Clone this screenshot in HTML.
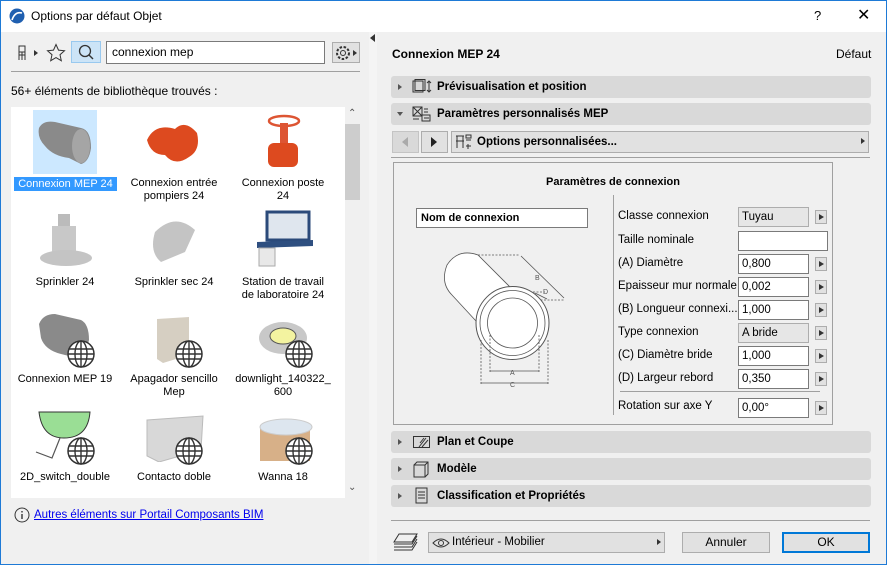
<!DOCTYPE html>
<html><head><meta charset="utf-8"><style>
*{box-sizing:border-box;margin:0;padding:0}
body{width:887px;height:565px;overflow:hidden;background:#f0f0f0;font-family:"Liberation Sans",sans-serif;font-size:12px;color:#000;position:relative}
.a{position:absolute}
.win{position:absolute;left:0;top:0;width:887px;height:565px;border:1px solid #1e7ad6}
.bar{position:absolute;left:391px;width:480px;height:22px;background:#d9d9d9;border-radius:3px;font-weight:bold;font-size:11.5px;line-height:22px;padding-left:46px}
.bar .tri{position:absolute;left:7px;top:8px;width:0;height:0;border-left:4px solid #555;border-top:3px solid transparent;border-bottom:3px solid transparent}
.lbl{position:absolute;left:618px;font-size:11.5px}
.fld{position:absolute;left:738px;width:71px;height:20px;background:#fff;border:1px solid #7a7a7a;font-size:11.5px;line-height:18px;padding-left:3px}
.fld.g{background:#e6e6e6;border-color:#adadad}
.arr{position:absolute;left:815px;width:12px;height:14px;background:#e1e1e1;border:1px solid #adadad}
.arr:after{content:"";position:absolute;left:3px;top:3px;border-left:5px solid #333;border-top:3px solid transparent;border-bottom:3px solid transparent}
.it{position:absolute;width:110px;text-align:center;font-size:11px;line-height:13px}
.globe{position:absolute;width:28px;height:28px}
</style></head><body>
<div class="a" style="left:0;top:0;width:887px;height:32px;background:#fff"></div>
<svg class="a" style="left:9px;top:8px" width="16" height="16"><circle cx="8" cy="8" r="7.5" fill="#1f5fb0"/><path d="M3 12 Q6 3 13 5" stroke="#fff" stroke-width="1.6" fill="none"/></svg>
<div class="a" style="left:31px;top:9px;font-size:12px">Options par défaut Objet</div>
<div class="a" style="left:814px;top:8px;font-size:13px">?</div>
<div class="a" style="left:857px;top:5px;font-size:16px">✕</div>

<!-- left toolbar -->
<svg class="a" style="left:16px;top:44px" width="24" height="18"><path d="M3 2h6v6H3zM3 8v8M9 8v8M6 8v8M3 11h6" stroke="#333" fill="none"/><path d="M18 6l4 3-4 3z" fill="#333"/></svg>
<svg class="a" style="left:46px;top:43px" width="20" height="20"><path d="M10 1.5l2.5 5.6 6 .6-4.5 4 1.3 6-5.3-3.1-5.3 3.1 1.3-6-4.5-4 6-.6z" stroke="#333" fill="none"/></svg>
<div class="a" style="left:71px;top:41px;width:30px;height:22px;background:#cce4f7;border:1px solid #99c9ef"></div>
<svg class="a" style="left:77px;top:44px" width="18" height="18"><circle cx="8" cy="7" r="5.5" stroke="#333" fill="none" stroke-width="1.3"/><path d="M12 11l4 4" stroke="#333" stroke-width="1.4"/></svg>
<div class="a" style="left:106px;top:41px;width:219px;height:23px;background:#fff;border:1px solid #7a7a7a;padding:3px 0 0 5px;font-size:12px">connexion mep</div>
<div class="a" style="left:332px;top:42px;width:28px;height:21px;background:#e1e1e1;border:1px solid #adadad"></div>
<svg class="a" style="left:335px;top:44px" width="24" height="18"><circle cx="8" cy="9" r="6" stroke="#333" fill="none" stroke-dasharray="2.5 1.6" stroke-width="2"/><circle cx="8" cy="9" r="2.5" stroke="#333" fill="none"/><path d="M18 6l4 3-4 3z" fill="#333"/></svg>
<div class="a" style="left:11px;top:71px;width:349px;height:1px;background:#a0a0a0"></div>
<div class="a" style="left:11px;top:84px;font-size:12px">56+ éléments de bibliothèque trouvés :</div>

<!-- list -->
<div class="a" style="left:11px;top:107px;width:334px;height:391px;background:#fff"></div>
<div class="a" style="left:345px;top:107px;width:15px;height:391px;background:#f0f0f0"></div>
<div class="a" style="left:345px;top:124px;width:15px;height:76px;background:#cdcdcd"></div>
<div class="a" style="left:348px;top:108px;font-size:10px;color:#555">⌃</div>
<div class="a" style="left:348px;top:482px;font-size:10px;color:#555">⌄</div>

<div class="a" style="left:33px;top:110px;width:64px;height:64px;background:#cce8ff"></div>
<svg class="a" style="left:33px;top:110px" width="64" height="64"><path d="M6 18 Q10 10 22 12 L48 18 Q58 20 58 38 Q56 52 48 54 L36 48 Q20 46 12 36 Q4 28 6 18z" fill="#8a8a8a"/><ellipse cx="48" cy="36" rx="9" ry="17" fill="#a5a5a5"/></svg>
<div class="a" style="left:14px;top:177px;width:103px;height:14px;background:#3399ff;color:#fff;font-size:11px;line-height:14px;text-align:center">Connexion MEP 24</div>
<svg class="a" style="left:145px;top:115px" width="58" height="55"><path d="M2 25 Q10 8 30 14 Q40 4 52 18 Q56 35 44 42 Q30 52 20 40 Q6 40 2 25z" fill="#dd4a1f"/></svg>
<div class="it" style="left:119px;top:177px">Connexion entrée<br>pompiers 24</div>
<svg class="a" style="left:262px;top:113px" width="44" height="58"><ellipse cx="22" cy="8" rx="15" ry="5" fill="none" stroke="#d53" stroke-width="2.5"/><rect x="18" y="10" width="8" height="22" fill="#d53"/><rect x="6" y="30" width="30" height="24" rx="6" fill="#dd4a1f"/></svg>
<div class="it" style="left:228px;top:177px">Connexion poste<br>24</div>

<svg class="a" style="left:38px;top:212px" width="56" height="56"><rect x="20" y="2" width="12" height="14" fill="#bbb"/><rect x="14" y="14" width="24" height="30" fill="#c8c8c8"/><ellipse cx="28" cy="46" rx="26" ry="8" fill="#c4c4c4"/></svg>
<div class="it" style="left:10px;top:276px">Sprinkler 24</div>
<svg class="a" style="left:145px;top:212px" width="56" height="56"><path d="M10 20 Q30 0 50 18 L40 40 L16 50 Q4 40 10 20z" fill="#c4c4c4"/></svg>
<div class="it" style="left:119px;top:276px">Sprinkler sec 24</div>
<svg class="a" style="left:255px;top:210px" width="60" height="58"><rect x="12" y="2" width="42" height="28" fill="#dfe6ee" stroke="#2b4a7a" stroke-width="3"/><path d="M2 32 L58 30 L58 36 L2 38z" fill="#2e4f80"/><rect x="4" y="38" width="16" height="18" fill="#e8e8e8" stroke="#aaa"/></svg>
<div class="it" style="left:228px;top:276px">Station de travail<br>de laboratoire 24</div>

<svg class="a" style="left:35px;top:310px" width="60" height="55"><path d="M4 14 Q8 4 20 4 L46 10 Q54 14 54 30 Q50 46 42 48 L26 44 Q10 40 6 28z" fill="#8a8a8a"/></svg>
<div class="it" style="left:10px;top:373px">Connexion MEP 19</div>
<svg class="a" style="left:155px;top:315px" width="40" height="50"><path d="M2 4 L34 2 L34 40 L8 48 L2 44z" fill="#d6cfc2"/></svg>
<div class="it" style="left:119px;top:373px">Apagador sencillo<br>Mep</div>
<svg class="a" style="left:258px;top:318px" width="50" height="40"><ellipse cx="25" cy="20" rx="24" ry="16" fill="#c8c8c8"/><ellipse cx="25" cy="18" rx="13" ry="8" fill="#f3f3a0" stroke="#555"/></svg>
<div class="it" style="left:228px;top:373px">downlight_140322_<br>600</div>

<svg class="a" style="left:32px;top:410px" width="62" height="52"><path d="M7 2 H58 Q56 28 32 28 Q10 28 7 2z" fill="#9ade95" stroke="#333"/><path d="M28 28 L20 48 L4 42" stroke="#555" fill="none" stroke-width="1.2"/></svg>
<div class="it" style="left:10px;top:471px">2D_switch_double</div>
<svg class="a" style="left:145px;top:412px" width="60" height="50"><path d="M2 8 L58 4 L56 38 L14 50 L2 44z" fill="#d8d8d8" stroke="#bbb"/></svg>
<div class="it" style="left:119px;top:471px">Contacto doble</div>
<svg class="a" style="left:258px;top:405px" width="55" height="60"><rect x="2" y="22" width="50" height="34" fill="#d7b088"/><ellipse cx="28" cy="22" rx="26" ry="8" fill="#dde6ef" stroke="#ccc"/></svg>
<div class="it" style="left:228px;top:471px">Wanna 18</div>

<svg width="0" height="0" style="position:absolute"><defs><g id="gl"><circle cx="14" cy="14" r="13" fill="#fff" stroke="#333" stroke-width="1.5"/><ellipse cx="14" cy="14" rx="6" ry="13" fill="none" stroke="#333" stroke-width="1.4"/><path d="M14 1v26M2 9h24M1 14h26M2 19h24" stroke="#333" stroke-width="1.4"/></g></defs></svg>
<svg class="globe" style="left:67px;top:340px"><use href="#gl"/></svg>
<svg class="globe" style="left:175px;top:340px"><use href="#gl"/></svg>
<svg class="globe" style="left:285px;top:340px"><use href="#gl"/></svg>
<svg class="globe" style="left:67px;top:437px"><use href="#gl"/></svg>
<svg class="globe" style="left:175px;top:437px"><use href="#gl"/></svg>
<svg class="globe" style="left:285px;top:437px"><use href="#gl"/></svg>

<svg class="a" style="left:14px;top:507px" width="16" height="16"><circle cx="8" cy="8" r="7" fill="none" stroke="#333"/><path d="M8 7v5M8 4v1.5" stroke="#333" stroke-width="1.4"/></svg>
<div class="a" style="left:34px;top:509px;font-size:11.5px;color:#0000ee;text-decoration:underline">Autres éléments sur Portail Composants BIM</div>

<!-- splitter -->
<div class="a" style="left:369px;top:32px;width:8px;height:532px;background:#f4f4f4"></div>
<div class="a" style="left:370px;top:34px;border-right:5px solid #333;border-top:4px solid transparent;border-bottom:4px solid transparent"></div>

<!-- right -->
<div class="a" style="left:392px;top:47px;font-weight:bold;font-size:12px">Connexion MEP 24</div>
<div class="a" style="left:836px;top:47px;font-size:12px">Défaut</div>

<div class="bar" style="top:76px"><span class="tri"></span><svg class="a" style="left:21px;top:3px" width="20" height="16"><rect x="1" y="2" width="10" height="11" fill="none" stroke="#333"/><rect x="3" y="0.5" width="10" height="11" fill="none" stroke="#333"/><path d="M17 2v11M15 4l2-2 2 2M15 11l2 2 2-2" stroke="#333" fill="none"/></svg>Prévisualisation et position</div>
<div class="bar" style="top:103px"><span class="tri" style="left:6px;top:9px;border-left:3px solid transparent;border-right:3px solid transparent;border-top:4px solid #555;border-bottom:0"></span><svg class="a" style="left:21px;top:3px" width="20" height="16"><rect x="1" y="1" width="9" height="9" fill="none" stroke="#333"/><path d="M1 1l9 9M10 1l-9 9M12 3h4M12 6h4M10 9h8v6h-8zM12 12h5M1 13h6" stroke="#333" fill="none"/></svg>Paramètres personnalisés MEP</div>

<div class="a" style="left:392px;top:131px;width:27px;height:22px;background:#d9d9d9;border:1px solid #c4c4c4"></div>
<div class="a" style="left:402px;top:137px;border-right:6px solid #aaa;border-top:5px solid transparent;border-bottom:5px solid transparent"></div>
<div class="a" style="left:421px;top:131px;width:27px;height:22px;background:#e1e1e1;border:1px solid #adadad"></div>
<div class="a" style="left:431px;top:137px;border-left:6px solid #222;border-top:5px solid transparent;border-bottom:5px solid transparent"></div>
<div class="a" style="left:451px;top:131px;width:418px;height:22px;background:#e1e1e1;border:1px solid #adadad;font-weight:bold;font-size:11.5px;line-height:20px;padding-left:25px">Options personnalisées...</div>
<svg class="a" style="left:455px;top:134px" width="18" height="16"><path d="M1 2h8M2 2v12M8 2v12M1 7h8M11 1h5v3h-5zM11 6h5M13 10v5M11 12h5" stroke="#333" fill="none"/></svg>
<div class="a" style="left:861px;top:138px;border-left:4px solid #333;border-top:3px solid transparent;border-bottom:3px solid transparent"></div>
<div class="a" style="left:391px;top:157px;width:479px;height:1px;background:#a0a0a0"></div>

<div class="a" style="left:393px;top:162px;width:440px;height:263px;border:1px solid #a0a0a0"></div>
<div class="a" style="left:393px;top:176px;width:440px;text-align:center;font-weight:bold;font-size:11px">Paramètres de connexion</div>
<div class="a" style="left:613px;top:195px;width:1px;height:220px;background:#a0a0a0"></div>
<div class="a" style="left:416px;top:208px;width:172px;height:20px;background:#fff;border:1px solid #7a7a7a;font-weight:bold;font-size:11px;line-height:18px;padding-left:4px">Nom de connexion</div>

<svg class="a" style="left:0;top:0" width="887" height="565" fill="none" stroke="#555" stroke-width="0.8">
<path d="M510 287 L478 255 Q458 248 447 265 Q440 283 452 295 L476 321" fill="#fff"/>
<path d="M478 255 H520 M523 300 H565 M533 292 H545" stroke-dasharray="2 1.5"/>
<path d="M521 256 L564 298 M535 293 L547 299"/>
<text x="535" y="280" font-size="7" fill="#555" stroke="none" font-family="Liberation Sans">B</text>
<text x="543" y="294" font-size="7" fill="#555" stroke="none" font-family="Liberation Sans">D</text>
<circle cx="512.5" cy="323" r="36.5" fill="#fff" stroke-width="1"/>
<circle cx="512.5" cy="323" r="32.5"/>
<circle cx="512.5" cy="323" r="25"/>
<path d="M490 335V372M539 335V372M481 340V384M548 340V384" stroke-dasharray="2 1.5"/>
<path d="M490 371H539M481 383H548"/>
<text x="510" y="375" font-size="7" fill="#555" stroke="none" font-family="Liberation Sans">A</text>
<text x="510" y="387" font-size="7" fill="#555" stroke="none" font-family="Liberation Sans">C</text>
</svg>

<div class="lbl" style="top:210px">Classe connexion</div><div class="fld g" style="top:207px">Tuyau</div><div class="arr" style="top:210px"></div>
<div class="lbl" style="top:234px">Taille nominale</div><div class="fld" style="top:231px;width:90px"></div>
<div class="lbl" style="top:257px">(A) Diamètre</div><div class="fld" style="top:254px">0,800</div><div class="arr" style="top:257px"></div>
<div class="lbl" style="top:280px">Epaisseur mur normale</div><div class="fld" style="top:277px">0,002</div><div class="arr" style="top:280px"></div>
<div class="lbl" style="top:303px">(B) Longueur connexi...</div><div class="fld" style="top:300px">1,000</div><div class="arr" style="top:303px"></div>
<div class="lbl" style="top:326px">Type connexion</div><div class="fld g" style="top:323px">A bride</div><div class="arr" style="top:326px"></div>
<div class="lbl" style="top:349px">(C) Diamètre bride</div><div class="fld" style="top:346px">1,000</div><div class="arr" style="top:349px"></div>
<div class="lbl" style="top:372px">(D) Largeur rebord</div><div class="fld" style="top:369px">0,350</div><div class="arr" style="top:372px"></div>
<div class="a" style="left:620px;top:391px;width:200px;height:1px;background:#a0a0a0"></div>
<div class="lbl" style="top:400px">Rotation sur axe Y</div><div class="fld" style="top:398px">0,00°</div><div class="arr" style="top:401px"></div>

<div class="bar" style="top:431px"><span class="tri"></span><svg class="a" style="left:21px;top:3px" width="20" height="16"><rect x="1.5" y="2.5" width="16" height="11" fill="none" stroke="#333"/><path d="M7 13L14 4M10 13L16 6M8 9l4-5" stroke="#333"/></svg>Plan et Coupe</div>
<div class="bar" style="top:458px"><span class="tri"></span><svg class="a" style="left:21px;top:3px" width="20" height="17"><path d="M2 4h11v12H2zM2 4l3-3h11v12l-3 3M13 4l3-3" stroke="#333" fill="none"/></svg>Modèle</div>
<div class="bar" style="top:485px"><span class="tri"></span><svg class="a" style="left:23px;top:2px" width="16" height="18"><rect x="2" y="1" width="11" height="15" fill="none" stroke="#333"/><path d="M4 5h7M4 8h7M4 11h7" stroke="#333"/></svg>Classification et Propriétés</div>

<div class="a" style="left:391px;top:520px;width:479px;height:1px;background:#a0a0a0"></div>
<svg class="a" style="left:393px;top:532px" width="26" height="20"><path d="M6 2h18l-5 8H1zM1 12h18l5-8M1 15h18l5-8M1 18h18l5-8" stroke="#333" fill="none"/></svg>
<div class="a" style="left:428px;top:532px;width:237px;height:21px;background:#e1e1e1;border:1px solid #adadad;font-size:11.5px;line-height:19px;padding-left:23px">Intérieur - Mobilier</div>
<svg class="a" style="left:432px;top:537px" width="18" height="12"><path d="M1 6 Q9 -2 17 6 Q9 14 1 6z" fill="none" stroke="#333"/><circle cx="9" cy="6" r="2.5" fill="none" stroke="#333"/></svg>
<div class="a" style="left:657px;top:539px;border-left:4px solid #333;border-top:3px solid transparent;border-bottom:3px solid transparent"></div>
<div class="a" style="left:682px;top:532px;width:88px;height:21px;background:#e1e1e1;border:1px solid #adadad;text-align:center;line-height:19px;font-size:12px">Annuler</div>
<div class="a" style="left:782px;top:532px;width:88px;height:21px;background:#e1e1e1;border:2px solid #0078d7;text-align:center;line-height:17px;font-size:12px">OK</div>
<div class="win"></div>
</body></html>
